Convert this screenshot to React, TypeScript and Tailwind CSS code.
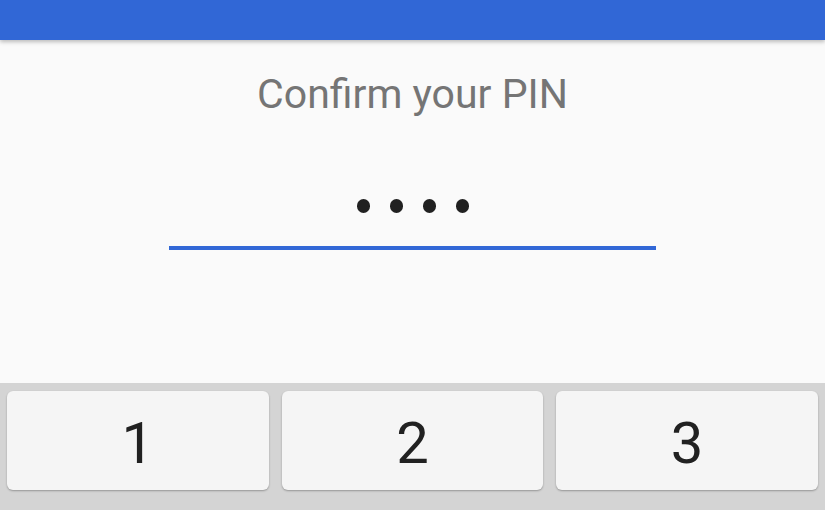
import React from "react";

export default function App() {
  const keys = ["1", "2", "3"];
  return (
    <div className="w-[825px] h-[510px] overflow-hidden flex flex-col bg-[#fafafa]" style={{ fontFamily: "Roboto, 'Noto Sans', sans-serif" }}>
      <div className="h-[40px] shrink-0 bg-[#3167d6] shadow-[0_2px_4px_rgba(0,0,0,0.25)] relative z-10" />
      <div className="h-[343px] shrink-0 flex flex-col items-center">
        <div className="mt-[34px] text-[41px] leading-none text-[#757575]">Confirm your PIN</div>
        <div className="mt-[84px] h-[14px] flex items-center gap-[20px]">
          {[0, 1, 2, 3].map((i) => (
            <div key={i} className="w-[13px] h-[14px] rounded-full bg-[#212121]" />
          ))}
        </div>
        <div className="mt-[33px] w-[487px] h-[4px] bg-[#3167d6]" />
      </div>
      <div className="flex-1 bg-[#d4d4d4] px-[7px] pt-[8px]">
        <div className="grid grid-cols-3 gap-[13px]">
          {keys.map((k) => (
            <div
              key={k}
              className="h-[99px] pt-[4px] rounded-[6px] bg-[#f5f5f5] shadow-[0_1px_2px_rgba(0,0,0,0.3)] flex items-center justify-center text-[58px] leading-none text-[#212121]"
            >
              {k}
            </div>
          ))}
        </div>
      </div>
    </div>
  );
}
